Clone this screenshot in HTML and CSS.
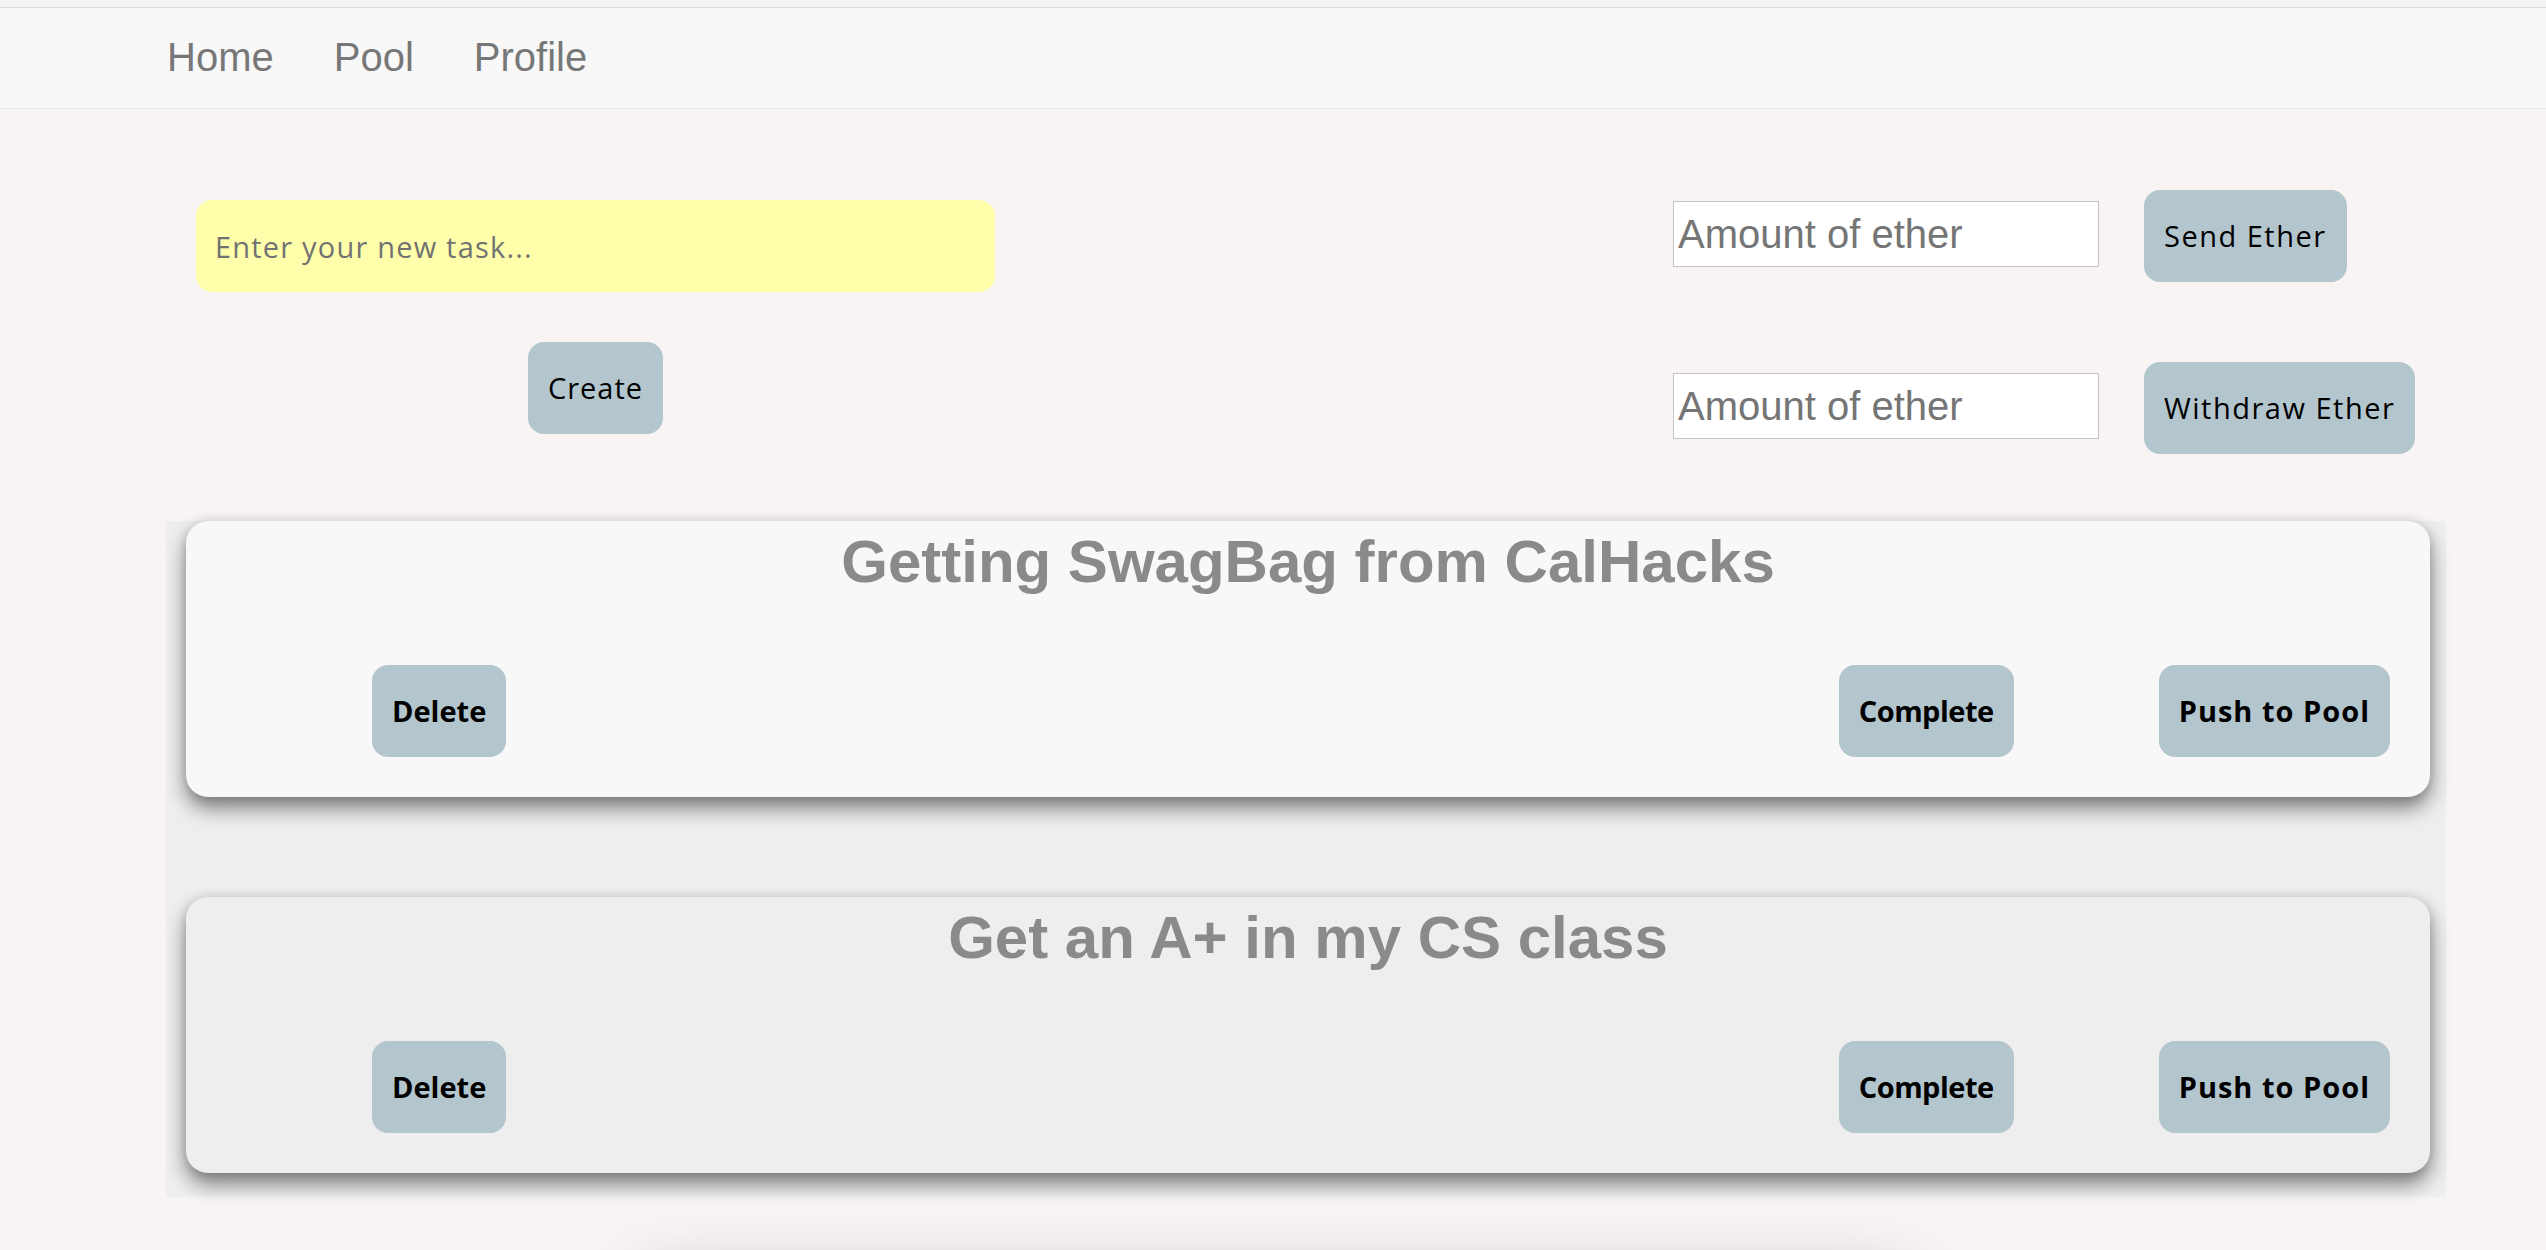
FILE: index.html
```html
<!DOCTYPE html>
<html lang="en">
<head>
<meta charset="utf-8">
<title>Tasks</title>
<link rel="stylesheet" href="styles.css">
</head>
<body>
<div class="topstrip"></div>
<nav class="navbar">
  <ul class="nav-links">
    <li><a href="#">Home</a></li>
    <li><a href="#">Pool</a></li>
    <li><a href="#">Profile</a></li>
  </ul>
</nav>
<main class="page">
  <section class="controls">
    <div class="create-col">
      <input class="task-input" type="text" placeholder="Enter your new task...">
      <button class="btn create-btn">Create</button>
    </div>
    <div class="ether-col">
      <div class="ether-row">
        <input class="amount" type="text" placeholder="Amount of ether">
        <button class="btn">Send Ether</button>
      </div>
      <div class="ether-row second">
        <input class="amount" type="text" placeholder="Amount of ether">
        <button class="btn">Withdraw Ether</button>
      </div>
    </div>
  </section>
  <section class="tasks">
    <div class="task-card light">
      <h1 class="task-title">Getting SwagBag from CalHacks</h1>
      <div class="task-actions">
        <button class="btn bold delete">Delete</button>
        <button class="btn bold complete">Complete</button>
        <button class="btn bold push">Push to Pool</button>
      </div>
    </div>
    <div class="task-card">
      <h1 class="task-title">Get an A+ in my CS class</h1>
      <div class="task-actions">
        <button class="btn bold delete">Delete</button>
        <button class="btn bold complete">Complete</button>
        <button class="btn bold push">Push to Pool</button>
      </div>
    </div>
  </section>
  <div class="pool-box"></div>
</main>
</body>
</html>
```

FILE: styles.css
```css
html, body {
  margin: 0;
  padding: 0;
}

body {
  background: #f7f4f3;
  font-family: "Liberation Sans", Arial, sans-serif;
  width: 2546px;
}

.topstrip {
  height: 7px;
  background: #f5f5f5;
}

.navbar {
  background: #f8f8f8;
  border-top: 1px solid #dadada;
  border-bottom: 1px solid #e7e7e7;
}

.nav-links {
  list-style: none;
  margin: 0;
  padding: 0 0 0 137px;
  display: flex;
}

.nav-links a {
  display: block;
  padding: 26px 30px 28px;
  font-family: "Liberation Sans", Arial, sans-serif;
  font-size: 40px;
  line-height: 46px;
  color: #777777;
  text-decoration: none;
}

.controls {
  display: grid;
  grid-template-columns: 799px auto;
  column-gap: 678px;
  padding-left: 196px;
  align-items: start;
}

.create-col {
  padding-top: 91px;
  display: flex;
  flex-direction: column;
  align-items: center;
}

.task-input {
  box-sizing: border-box;
  width: 799px;
  height: 92px;
  border: none;
  border-radius: 16px;
  background: #ffffab;
  padding: 0 0 0 19px;
  font-family: "Open Sans", sans-serif;
  font-size: 29px;
  letter-spacing: 1.2px;
  color: #333;
  outline: none;
}

.task-input::placeholder {
  color: #727272;
}

.btn {
  border: none;
  border-radius: 16px;
  background: #b3c5cd;
  color: #000;
  font-family: "Open Sans", sans-serif;
  font-size: 29px;
  letter-spacing: 1.5px;
  line-height: 32px;
  padding: 30px 20px;
  cursor: pointer;
}

.create-btn {
  margin-top: 50px;
  letter-spacing: 1px;
}

.ether-col {
  padding-top: 81px;
}

.ether-row {
  display: flex;
  align-items: flex-start;
  gap: 45px;
}

.ether-row.second {
  margin-top: 80px;
}

.amount {
  box-sizing: border-box;
  width: 426px;
  height: 66px;
  margin-top: 11px;
  border: 1px solid #c4c4c4;
  border-radius: 0;
  background: #ffffff;
  padding: 0 4px;
  font-family: "Liberation Sans", Arial, sans-serif;
  font-size: 40px;
  color: #333;
  outline: none;
}

.amount::placeholder {
  color: #757575;
}

.tasks {
  box-sizing: border-box;
  margin-top: 67px;
  margin-left: 166px;
  width: 2280px;
  background: #eeeeee;
  padding: 0 16px 24px 20px;
  display: flex;
  flex-direction: column;
  gap: 100px;
}

.task-card {
  background: #eeeeee;
  border-radius: 22px;
  padding: 6px 0 40px;
  box-shadow: 0 11px 20px rgba(0, 0, 0, 0.48), 0 0 12px rgba(0, 0, 0, 0.1);
}

.task-card.light {
  background: #f8f8f8;
}

.task-title {
  margin: 0;
  text-align: center;
  font-family: "Liberation Sans", Arial, sans-serif;
  font-weight: bold;
  font-size: 60px;
  line-height: 69px;
  color: #888a8c;
}

.task-actions {
  margin-top: 69px;
  display: flex;
  padding: 0 40px 0 186px;
}

.btn.bold {
  font-weight: 700;
  letter-spacing: 0;
}

.btn.complete {
  margin-left: auto;
  letter-spacing: -0.5px;
}

.btn.push {
  margin-left: 145px;
  letter-spacing: 1px;
}

.pool-box {
  margin: 90px 0 0 640px;
  width: 1270px;
  height: 300px;
  background: #f7f4f3;
  box-shadow: 0 0 70px rgba(0, 0, 0, 0.3);
}
```
